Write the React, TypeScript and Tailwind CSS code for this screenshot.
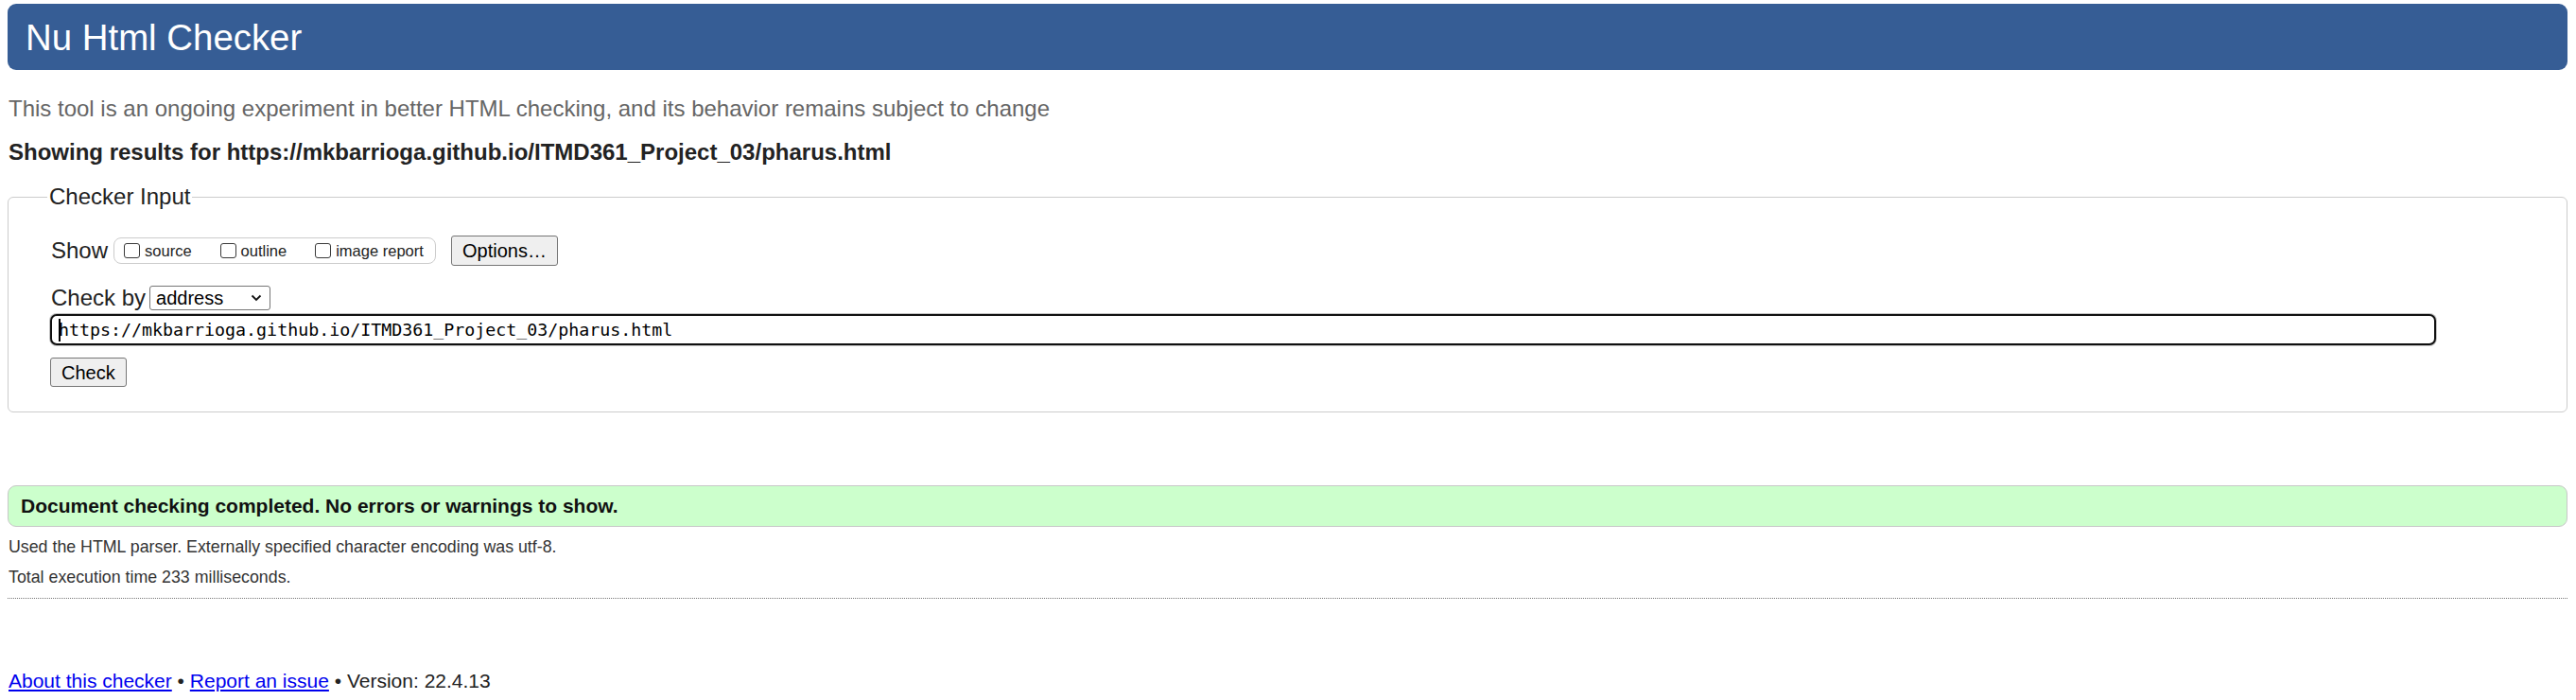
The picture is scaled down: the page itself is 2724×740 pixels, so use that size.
import React from "react"

const sans = "font-['Liberation_Sans',Arial,sans-serif]"

function Checkbox() {
    return <span className="inline-block w-[17px] h-[16px] shrink-0 rounded-[3px] border border-[#3b3b3b] bg-white" />
}

function Chevron() {
    return (
        <svg width="12" height="8" viewBox="0 0 12 8" className="shrink-0">
            <path d="M1.5 1.5 L6 6 L10.5 1.5" fill="none" stroke="#111" strokeWidth="1.8" />
        </svg>
    )
}

export default function App() {
    const options = ["source", "outline", "image report"]

    return (
        <div className={`${sans} min-h-screen bg-white pl-[8px] pr-[9px] pt-[4px] text-[#222]`}>
            {/* Title bar */}
            <h1 className="flex items-center h-[70px] pl-[19px] pt-[2px] rounded-[9px] bg-[#365d95] text-white text-[38.4px] leading-[44px]">
                Nu Html Checker
            </h1>

            <p className="mt-[27px] pl-[1px] text-[24px] leading-[28px] text-[#666]">
                This tool is an ongoing experiment in better HTML checking, and its behavior remains subject to change
            </p>

            <p className="mt-[18px] pl-[1px] text-[24px] leading-[28px] font-bold">
                Showing results for https://mkbarrioga.github.io/ITMD361_Project_03/pharus.html
            </p>

            {/* Checker input */}
            <fieldset className="mt-[19px] border border-[#ccc] rounded-[6px] pl-[45px] pt-[27px] pb-[26px]">
                <legend className="-ml-[4px] px-[2px] text-[24px] leading-[28px]">Checker Input</legend>

                <div className="flex items-center h-[32px]">
                    <span className="text-[24px] leading-[28px]">Show</span>
                    <div className="ml-[6px] flex items-center gap-[30px] h-[28px] w-[341px] pl-[10px] border border-[#ccc] rounded-[8px]">
                        {options.map((o) => (
                            <label key={o} className="flex items-center gap-[5px] text-[16.5px] leading-[20px]">
                                <Checkbox />
                                {o}
                            </label>
                        ))}
                    </div>
                    <button className="ml-[16px] h-[32px] px-[11px] border border-[#767676] rounded-[3px] bg-[#efefef] text-[20px] leading-[24px] text-black">
                        Options…
                    </button>
                </div>

                <div className="mt-[21px] flex items-center h-[26px]">
                    <span className="text-[24px] leading-[28px]">Check by</span>
                    <div className="ml-[4px] flex items-center justify-between w-[128px] h-[26px] pl-[6px] pr-[8px] border border-[#767676] rounded-[3px] bg-white text-[20px] leading-[24px] text-black">
                        address
                        <Chevron />
                    </div>
                </div>

                <div className="mt-[4px] -ml-[1px] flex items-center w-[2523px] h-[33px] pl-[7px] border-2 border-[#101010] rounded-[7px] shadow-[0_0_0_1px_#c4c4c4] bg-white">
                    <span className="w-[2px] h-[24px] bg-black shrink-0" />
                    <span className="-ml-[2px] font-['DejaVu_Sans_Mono',Consolas,monospace] text-[18.3px] leading-[24px] text-black">
                        https://mkbarrioga.github.io/ITMD361_Project_03/pharus.html
                    </span>
                </div>

                <button className="mt-[13px] -ml-[1px] block h-[31px] px-[11px] border border-[#767676] rounded-[3px] bg-[#efefef] text-[20px] leading-[24px] text-black">
                    Check
                </button>
            </fieldset>

            {/* Result */}
            <div className="mt-[77px] flex items-center h-[44px] px-[13px] border border-[#c8c8c8] rounded-[9px] bg-[#ccffcc] text-[21px] leading-[24px] font-bold text-[#111]">
                Document checking completed. No errors or warnings to show.
            </div>

            <p className="mt-[10px] pl-[1px] text-[17.8px] leading-[22px] text-[#333]">
                Used the HTML parser. Externally specified character encoding was utf-8.
            </p>
            <p className="mt-[10px] pl-[1px] text-[17.8px] leading-[22px] text-[#333]">
                Total execution time 233 milliseconds.
            </p>

            <hr className="mt-[11px] border-0 border-t border-dotted border-[#777]" />

            <p className="mt-[75px] pl-[1px] text-[21px] leading-[24px] text-[#222]">
                <a href="#" className="text-[#0000ee] underline">About this checker</a>
                {" • "}
                <a href="#" className="text-[#0000ee] underline">Report an issue</a>
                {" • Version: 22.4.13"}
            </p>
        </div>
    )
}
